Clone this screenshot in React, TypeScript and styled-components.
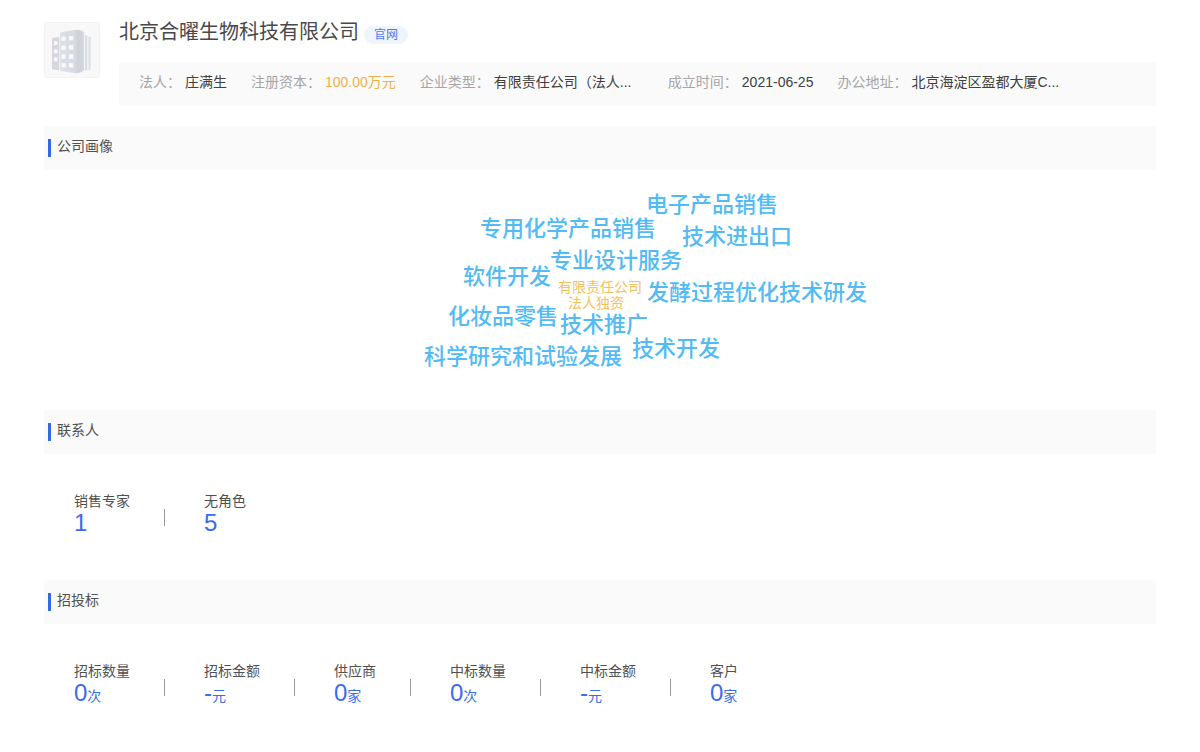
import React from 'react';
import styled, { createGlobalStyle } from 'styled-components';

const GlobalStyle = createGlobalStyle`
  body {
    margin: 0;
    background: #fff;
    color: #505050;
    font-family: "Liberation Sans", "Noto Sans CJK SC", sans-serif;
    font-size: 14px;
    font-weight: 400;
    line-height: 20px;
  }
`;

const Page = styled.main`
  padding: 22px 44px;
`;

const Header = styled.header`
  display: flex;
  gap: 19px;
  margin-bottom: 20px;
`;

const Logo = styled.svg`
  flex: none;
  width: 56px;
  height: 56px;
`;

const HeaderBody = styled.div`
  flex: 1;
  min-width: 0;
`;

const TitleRow = styled.div`
  display: flex;
  align-items: flex-start;
  gap: 5px;
  height: 40px;
`;

const Title = styled.h1`
  margin: 0;
  font-size: 20px;
  font-weight: 400;
  line-height: 20px;
  color: #484848;
`;

const SiteLink = styled.a`
  margin-top: 4px;
  padding: 0 10px;
  border-radius: 9px;
  background: #eff5fd;
  color: #4a78f2;
  font-size: 12px;
  line-height: 18px;
  text-decoration: none;
`;

const Facts = styled.dl`
  display: flex;
  flex-wrap: wrap;
  gap: 4px 24px;
  margin: 0;
  padding: 10px 20px 14px;
  background: #fafafa;
`;

const Fact = styled.div`
  display: flex;
  gap: 4px;
`;

const FactLabel = styled.dt`
  color: #a6a6a6;
`;

const FactValue = styled.dd<{ $accent?: boolean; $long?: boolean }>`
  margin: 0;
  min-width: ${(p) => (p.$long ? 150 : 0)}px;
  white-space: nowrap;
  color: ${(p) => (p.$accent ? '#eeb04a' : '#404040')};
`;

const SectionHeader = styled.div`
  display: flex;
  align-items: flex-start;
  gap: 6px;
  height: 34px;
  padding: 10px 4px 0;
  background: #fafafa;

  &::before {
    content: "";
    width: 3px;
    height: 18px;
    margin-top: 3px;
    background: #3068e8;
  }
`;

const SectionTitle = styled.h2`
  margin: 0;
  font-size: 14px;
  font-weight: 400;
  line-height: 20px;
`;

const Cloud = styled.div`
  position: relative;
  width: 480px;
  height: 240px;
  margin: 0 auto;
`;

const Word = styled.span<{ $x: number; $y: number; $small?: boolean }>`
  position: absolute;
  left: ${(p) => p.$x}px;
  top: ${(p) => p.$y}px;
  font-size: ${(p) => (p.$small ? 14 : 22)}px;
  line-height: ${(p) => (p.$small ? 16 : 24)}px;
  font-weight: ${(p) => (p.$small ? 400 : 500)};
  color: ${(p) => (p.$small ? '#f5c15c' : '#52bbf5')};
  white-space: nowrap;
`;

const Stats = styled.dl`
  display: flex;
  flex-wrap: wrap;
  margin: 0;
  padding: 37px 30px 45px;
`;

const Stat = styled.div`
  display: flex;
  flex-direction: column;

  &:not(:last-child) {
    padding-right: 34px;
    margin-right: 39px;
    background: linear-gradient(#999, #999) right 18px / 1px 17px no-repeat;
    border-right: 1px solid transparent;
    background-origin: border-box;
  }
`;

const StatLabel = styled.dt`
  line-height: 20px;
`;

const StatValue = styled.dd`
  margin: 0;
  font-size: 24px;
  line-height: 24px;
  color: #3a6cea;
`;

const Unit = styled.small`
  font-size: 14px;
`;

const facts = [
  { label: '法人', value: '庄满生' },
  { label: '注册资本', value: '100.00万元', accent: true },
  { label: '企业类型', value: '有限责任公司（法人...', long: true },
  { label: '成立时间', value: '2021-06-25' },
  { label: '办公地址', value: '北京海淀区盈都大厦C...', long: true },
];

const words = [
  { text: '电子产品销售', x: 286, y: 23 },
  { text: '专用化学产品销售', x: 120, y: 47 },
  { text: '技术进出口', x: 322, y: 55 },
  { text: '专业设计服务', x: 190, y: 79 },
  { text: '软件开发', x: 103, y: 95 },
  { text: '有限责任公司', x: 198, y: 109, small: true },
  { text: '法人独资', x: 208, y: 125, small: true },
  { text: '发酵过程优化技术研发', x: 287, y: 111 },
  { text: '化妆品零售', x: 88, y: 135 },
  { text: '技术推广', x: 200, y: 143 },
  { text: '技术开发', x: 272, y: 167 },
  { text: '科学研究和试验发展', x: 64, y: 175 },
];

const contacts = [
  { label: '销售专家', value: '1' },
  { label: '无角色', value: '5' },
];

const bids = [
  { label: '招标数量', value: '0', unit: '次' },
  { label: '招标金额', value: '-', unit: '元' },
  { label: '供应商', value: '0', unit: '家' },
  { label: '中标数量', value: '0', unit: '次' },
  { label: '中标金额', value: '-', unit: '元' },
  { label: '客户', value: '0', unit: '家' },
];

function BuildingLogo() {
  return (
    <Logo viewBox="0 0 56 56" role="img" aria-label="公司">
      <defs>
        <linearGradient id="tower" x1="0" x2="1" y1="0" y2="0">
          <stop offset="0" stopColor="#dde1e6" />
          <stop offset="0.6" stopColor="#d8dce2" />
          <stop offset="0.75" stopColor="#ced3da" />
          <stop offset="1" stopColor="#d3d7de" />
        </linearGradient>
      </defs>
      <rect x="0.5" y="0.5" width="55" height="55" rx="2" fill="#f8f8f8" stroke="#f3f3f3" />
      <path d="M8 17.300q0-1.300 1.300-1.500l6-.8v33.500l-6-1q-1.300-.2-1.300-1.500z" fill="#d5d9df" />
      <path d="M16 12q0-1.700 1.700-2l14.300-2.200q7 .2 8 3v37q-1 3-8 3.400l-14.300-2q-1.700-.2-1.700-1.800z" fill="url(#tower)" />
      <path d="M41 13l2.300 .8v34l-2.300 1z" fill="#d8dce2" />
      <path d="M44.300 14.200l2.500 .8v32.500l-2.500 .8z" fill="#dee1e6" />
      <g fill="#fafafa">
        <path d="M10 19.300h3.400v3.800h-3.400zM10 27.500h3.400v3.800h-3.400zM10 35.500h3.400v3.800h-3.400z" />
        <path d="M17.500 15l4-.5v4.300l-4 .3zM17.500 23.800l4-.3v4.300l-4 .1zM17.500 32.500h4v4.200h-4zM17.500 41l4 .3v4.200l-4-.4z" />
        <path d="M25 14.200l4.200-.5v4.500l-4.200 .3zM25 23.300l4.200-.2v4.400l-4.200 .1zM25 32.300h4.200v4.400h-4.200zM25 41l4.200 .3v4.400l-4.200-.4z" />
      </g>
    </Logo>
  );
}

function StatList({ items }: { items: { label: string; value: string; unit?: string }[] }) {
  return (
    <Stats>
      {items.map((s) => (
        <Stat key={s.label}>
          <StatLabel>{s.label}</StatLabel>
          <StatValue>
            {s.value}
            {s.unit && <Unit>{s.unit}</Unit>}
          </StatValue>
        </Stat>
      ))}
    </Stats>
  );
}

function Section({ title, children }: { title: string; children: React.ReactNode }) {
  return (
    <section>
      <SectionHeader>
        <SectionTitle>{title}</SectionTitle>
      </SectionHeader>
      {children}
    </section>
  );
}

export default function App() {
  return (
    <>
      <GlobalStyle />
      <Page lang="zh-CN">
        <Header>
          <BuildingLogo />
          <HeaderBody>
            <TitleRow>
              <Title>北京合曜生物科技有限公司</Title>
              <SiteLink href="#">官网</SiteLink>
            </TitleRow>
            <Facts>
              {facts.map((f) => (
                <Fact key={f.label}>
                  <FactLabel>{f.label}：</FactLabel>
                  <FactValue $accent={f.accent} $long={f.long}>
                    {f.value}
                  </FactValue>
                </Fact>
              ))}
            </Facts>
          </HeaderBody>
        </Header>
        <Section title="公司画像">
          <Cloud>
            {words.map((w) => (
              <Word key={w.text} $x={w.x} $y={w.y} $small={w.small}>
                {w.text}
              </Word>
            ))}
          </Cloud>
        </Section>
        <Section title="联系人">
          <StatList items={contacts} />
        </Section>
        <Section title="招投标">
          <StatList items={bids} />
        </Section>
      </Page>
    </>
  );
}
